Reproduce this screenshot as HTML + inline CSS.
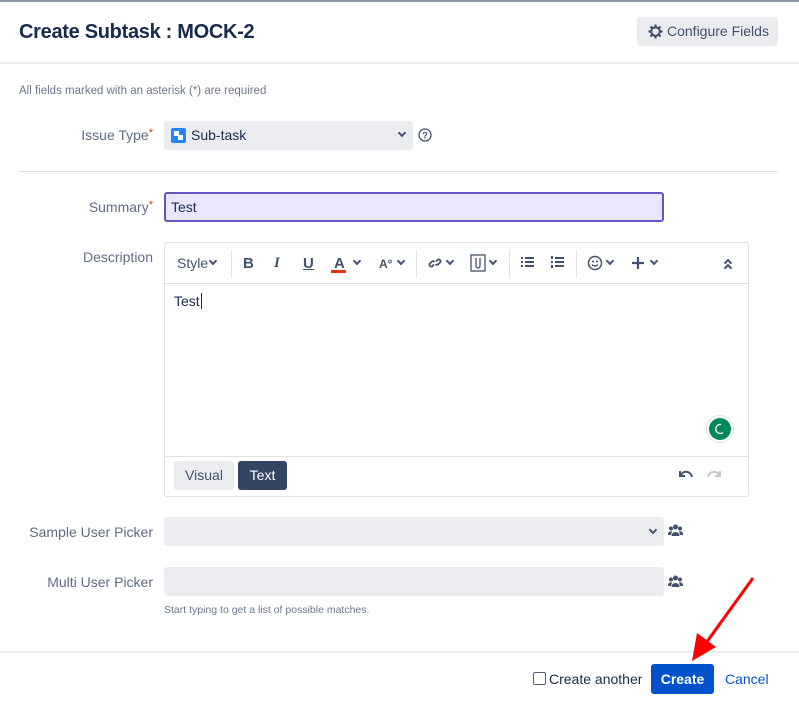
<!DOCTYPE html>
<html><head><meta charset="utf-8"><style>
*{box-sizing:border-box;margin:0;padding:0}
body{width:799px;height:701px;background:#fff;font-family:"Liberation Sans",sans-serif;color:#172b4d;position:relative;overflow:hidden;font-size:14px}
.a{position:absolute}
.lbl{position:absolute;right:646px;color:#5e6c84;font-size:14px;white-space:nowrap;text-align:right}
.req{color:#de350b;font-size:11px;vertical-align:top}
.field{position:absolute;background:#ebecf0;border-radius:3px}
.chev{position:absolute;width:6px;height:6px;border-right:2px solid #42526e;border-bottom:2px solid #42526e;transform:rotate(45deg)}
.tb{position:absolute;top:255px;font-size:15px;color:#42526e;font-weight:bold}
.sep{position:absolute;top:250px;width:1px;height:28px;background:#dfe1e6}
.sc{width:6px;height:6px;border-width:0 2px 2px 0}
</style></head><body>
<div class="a" style="left:0;top:0;width:799px;height:2px;background:#8993a4"></div>
<div class="a" style="left:19px;top:21px;font-size:20px;font-weight:bold;color:#172b4d;letter-spacing:-0.3px">Create Subtask : MOCK-2</div>
<div class="a" style="left:637px;top:17px;width:141px;height:29px;background:#ebecf0;border-radius:3px;color:#42526e;font-size:14px;line-height:29px;padding-left:30px">Configure Fields</div>
<svg class="a" style="left:648px;top:24px" width="15" height="15" viewBox="0 0 16 16"><circle cx="8" cy="8" r="4.5" fill="none" stroke="#42526e" stroke-width="2.2"/><g stroke="#42526e" stroke-width="2.4"><line x1="8" y1="0.5" x2="8" y2="3"/><line x1="8" y1="13" x2="8" y2="15.5"/><line x1="0.5" y1="8" x2="3" y2="8"/><line x1="13" y1="8" x2="15.5" y2="8"/><line x1="2.7" y1="2.7" x2="4.5" y2="4.5"/><line x1="11.5" y1="11.5" x2="13.3" y2="13.3"/><line x1="2.7" y1="13.3" x2="4.5" y2="11.5"/><line x1="11.5" y1="4.5" x2="13.3" y2="2.7"/></g></svg>
<div class="a" style="left:0;top:62px;width:799px;height:2px;background:#ebecf0"></div>
<div class="a" style="left:19px;top:85px;font-size:11.5px;color:#6b778c">All fields marked with an asterisk (*) are required</div>

<div class="lbl" style="top:127px">Issue Type<span class="req">*</span></div>
<div class="field" style="left:164px;top:121px;width:249px;height:29px"></div>
<div class="a" style="left:171px;top:128px;width:15px;height:15px;border-radius:2px;background:#2684ff"></div>
<div class="a" style="left:174px;top:131px;width:5px;height:5px;background:#fff"></div>
<div class="a" style="left:178px;top:135px;width:5px;height:5px;background:#fff"></div>
<div class="a" style="left:191px;top:127px;font-size:14px">Sub-task</div>
<div class="chev sc" style="left:399px;top:130px"></div>
<svg class="a" style="left:418px;top:128px" width="14" height="14"><circle cx="7" cy="7" r="6" fill="none" stroke="#42526e" stroke-width="1.3"/><text x="7" y="10.5" font-size="9.5" text-anchor="middle" fill="#42526e" font-family="Liberation Sans" font-weight="bold">?</text></svg>
<div class="a" style="left:19px;top:171px;width:759px;height:1px;background:#dfe1e6"></div>

<div class="lbl" style="top:199px">Summary<span class="req">*</span></div>
<div class="a" style="left:164px;top:192px;width:500px;height:30px;background:#eae6ff;border:2px solid #6554c0;border-radius:3px;padding-left:5px;line-height:26px;font-size:14px">Test</div>

<div class="lbl" style="top:249px">Description</div>
<div class="a" style="left:164px;top:242px;width:585px;height:255px;border:1px solid #dfe1e6;border-radius:3px"></div>
<div class="a" style="left:165px;top:283px;width:583px;height:1px;background:#dfe1e6"></div>
<div class="a" style="left:165px;top:456px;width:583px;height:1px;background:#dfe1e6"></div>
<div class="a" style="left:177px;top:255px;font-size:14px;color:#42526e">Style</div>
<div class="chev sc" style="left:210px;top:258px"></div>
<div class="sep" style="left:231px"></div>
<div class="tb" style="left:243px">B</div>
<div class="tb" style="left:274px;font-style:italic;font-family:'Liberation Serif',serif;font-weight:bold">I</div>
<div class="tb" style="left:303px;text-decoration:underline">U</div>
<div class="tb" style="left:334px">A</div>
<div class="a" style="left:331px;top:270px;width:15px;height:3px;background:#de350b"></div>
<div class="chev sc" style="left:354px;top:258px"></div>
<div class="tb" style="left:379px;font-size:12px;top:257px">A°</div>
<div class="chev sc" style="left:398px;top:258px"></div>
<div class="sep" style="left:416px"></div>
<svg class="a" style="left:427px;top:255px" width="16" height="16" viewBox="0 0 16 16"><g fill="none" stroke="#42526e" stroke-width="1.8"><path d="M7 9.5 L5 11.5 A2 2 0 0 1 2.5 9 L5 6.5 A2 2 0 0 1 7.5 7"/><path d="M9 6.5 L11 4.5 A2 2 0 0 1 13.5 7 L11 9.5 A2 2 0 0 1 8.5 9"/></g></svg>
<div class="chev sc" style="left:447px;top:258px"></div>
<svg class="a" style="left:470px;top:254px" width="16" height="18"><rect x="1" y="1" width="14" height="16" fill="none" stroke="#42526e" stroke-width="1.3"/><path d="M6 4v8a2 2 0 0 0 4 0V4" fill="none" stroke="#42526e" stroke-width="1.3"/></svg>
<div class="chev sc" style="left:490px;top:258px"></div>
<div class="sep" style="left:509px"></div>
<svg class="a" style="left:521px;top:256px" width="14" height="12" fill="#42526e"><rect x="0" y="1" width="2" height="2"/><rect x="0" y="5" width="2" height="2"/><rect x="0" y="9" width="2" height="2"/><rect x="4" y="1" width="9" height="2"/><rect x="4" y="5" width="9" height="2"/><rect x="4" y="9" width="9" height="2"/></svg>
<svg class="a" style="left:551px;top:256px" width="14" height="12" fill="#42526e"><rect x="0" y="0" width="2" height="3"/><rect x="0" y="5" width="2" height="2"/><rect x="0" y="9" width="2" height="3"/><rect x="4" y="1" width="9" height="2"/><rect x="4" y="5" width="9" height="2"/><rect x="4" y="9" width="9" height="2"/></svg>
<div class="sep" style="left:576px"></div>
<svg class="a" style="left:587px;top:255px" width="16" height="16"><circle cx="8" cy="8" r="6.5" fill="none" stroke="#42526e" stroke-width="1.5"/><circle cx="6" cy="6.5" r="1" fill="#42526e"/><circle cx="10" cy="6.5" r="1" fill="#42526e"/><path d="M5 9.5a3.5 3 0 0 0 6 0" fill="none" stroke="#42526e" stroke-width="1.3"/></svg>
<div class="chev sc" style="left:607px;top:258px"></div>
<svg class="a" style="left:631px;top:256px" width="14" height="14"><path d="M7 1v12M1 7h12" stroke="#42526e" stroke-width="2.2"/></svg>
<div class="chev sc" style="left:651px;top:258px"></div>
<div class="chev sc" style="left:725px;top:260px;transform:rotate(225deg)"></div>
<div class="chev sc" style="left:725px;top:265px;transform:rotate(225deg)"></div>
<div class="a" style="left:174px;top:293px;font-size:14px">Test<span style="border-left:1px solid #172b4d;margin-left:1px"></span></div>
<div class="a" style="left:706px;top:415px;width:28px;height:28px;border-radius:50%;background:#fff;border:1px solid #dfe1e6"></div>
<div class="a" style="left:709px;top:418px;width:22px;height:22px;border-radius:50%;background:#00875a"></div>
<svg class="a" style="left:713px;top:422px" width="14" height="14"><path d="M10 10.5A4.5 4.5 0 1 1 8 2.5" fill="none" stroke="#fff" stroke-width="1.3"/></svg>
<div class="a" style="left:174px;top:461px;width:60px;height:29px;background:#ebecf0;border-radius:3px;text-align:center;line-height:29px;color:#42526e">Visual</div>
<div class="a" style="left:238px;top:461px;width:49px;height:29px;background:#344563;border-radius:3px;text-align:center;line-height:29px;color:#fff">Text</div>
<svg class="a" style="left:678px;top:469px" width="16" height="12"><path d="M2 2v5h5M2.5 6.5A6 6 0 0 1 14 8" fill="none" stroke="#42526e" stroke-width="2"/></svg>
<svg class="a" style="left:706px;top:469px" width="16" height="12"><path d="M14 2v5H9M13.5 6.5A6 6 0 0 0 2 8" fill="none" stroke="#c1c7d0" stroke-width="2"/></svg>

<div class="lbl" style="top:524px">Sample User Picker</div>
<div class="field" style="left:164px;top:517px;width:500px;height:29px"></div>
<div class="chev sc" style="left:650px;top:527px"></div>
<div class="lbl" style="top:574px">Multi User Picker</div>
<div class="field" style="left:164px;top:567px;width:500px;height:29px"></div>
<svg class="a" style="left:668px;top:524px" width="15" height="13" fill="#42526e"><circle cx="7.5" cy="3" r="2.5"/><circle cx="3" cy="4.5" r="2"/><circle cx="12" cy="4.5" r="2"/><path d="M3.5 12a4 4 0 0 1 8 0z"/><path d="M0 11a3 3 0 0 1 4-3.5L3 11z"/><path d="M15 11a3 3 0 0 0-4-3.5L12 11z"/></svg>
<svg class="a" style="left:668px;top:575px" width="15" height="13" fill="#42526e"><circle cx="7.5" cy="3" r="2.5"/><circle cx="3" cy="4.5" r="2"/><circle cx="12" cy="4.5" r="2"/><path d="M3.5 12a4 4 0 0 1 8 0z"/><path d="M0 11a3 3 0 0 1 4-3.5L3 11z"/><path d="M15 11a3 3 0 0 0-4-3.5L12 11z"/></svg>
<div class="a" style="left:164px;top:604px;font-size:10.5px;color:#6b778c">Start typing to get a list of possible matches.</div>

<div class="a" style="left:0;top:651px;width:799px;height:2px;background:#ebecf0"></div>
<div class="a" style="left:533px;top:672px;width:13px;height:13px;border:1px solid #505f79;border-radius:2px;background:#fff"></div>
<div class="a" style="left:549px;top:671px;font-size:14px;color:#172b4d">Create another</div>
<div class="a" style="left:651px;top:664px;width:63px;height:30px;background:#0052cc;border-radius:3px;color:#fff;font-weight:bold;text-align:center;line-height:30px">Create</div>
<div class="a" style="left:725px;top:671px;font-size:14px;color:#0052cc">Cancel</div>
<svg class="a" style="left:0;top:0" width="799" height="701"><line x1="753" y1="578" x2="706" y2="643" stroke="#f00" stroke-width="3"/><polygon points="692,661 697,633 716,647" fill="#f00"/></svg>
</body></html>
